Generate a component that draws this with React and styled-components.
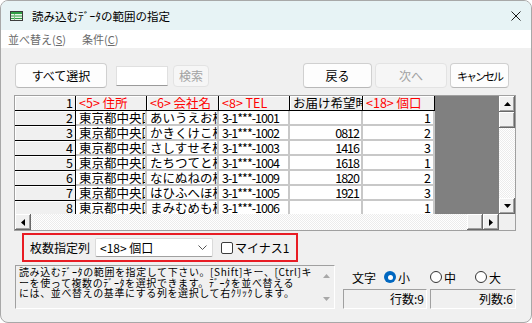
import React from 'react';
import styled, { createGlobalStyle } from 'styled-components';

const GlobalStyle = createGlobalStyle`
  html, body {
    margin: 0;
    padding: 0;
    background: #ffffff;
  }
  body {
    font-family: "Noto Sans CJK JP", "Noto Sans", sans-serif;
    color: #000;
  }
  * {
    box-sizing: border-box;
  }
`;

const Window = styled.div`
  width: 532px;
  height: 323px;
  border: 1px solid #a8a8a8;
  border-radius: 8px;
  overflow: hidden;
  display: flex;
  flex-direction: column;
  background: #f0f0f0;
`;

const TitleBar = styled.div`
  height: 29px;
  flex-shrink: 0;
  display: flex;
  align-items: center;
  gap: 9px;
  padding: 0 10px 0 9px;
  background: #e7f3f5;
  font-size: 11.5px;
`;

const CloseBox = styled.div`
  margin-left: auto;
  display: flex;
  align-items: center;
`;

const MenuBar = styled.div`
  height: 18px;
  flex-shrink: 0;
  display: flex;
  align-items: center;
  gap: 16px;
  padding-left: 7px;
  background: #ffffff;
  font-size: 11px;
  color: #6b6b6b;
`;

const Body = styled.div`
  flex: 1;
  display: flex;
  flex-direction: column;
  padding: 15px 15px 0 13px;
`;

const Toolbar = styled.div`
  display: flex;
  align-items: center;
  height: 25px;
  padding-left: 1px;
  padding-right: 7px;
`;

const Group = styled.div`
  display: flex;
  align-items: center;
  gap: ${(p) => p.$gap || 0}px;
  margin-left: ${(p) => (p.$right ? 'auto' : '0')};
`;

const Btn = styled.button`
  width: ${(p) => p.$w}px;
  height: ${(p) => p.$h || 25}px;
  margin-left: ${(p) => p.$ml || 0}px;
  padding: 0;
  border: 1px solid ${(p) => (p.disabled ? '#e3e3e3' : '#d0d0d0')};
  border-bottom-color: ${(p) => (p.disabled ? '#e3e3e3' : '#b8b8b8')};
  border-radius: 4px;
  background: ${(p) => (p.disabled ? '#f6f6f6' : '#fdfdfd')};
  color: ${(p) => (p.disabled ? '#a2a2a2' : '#000')};
  font-family: inherit;
  font-size: ${(p) => (p.$tight ? 11 : 12)}px;
  letter-spacing: ${(p) => (p.$tight ? -2 : 0)}px;
  white-space: nowrap;
`;

const SearchInput = styled.div`
  width: 52px;
  height: 20px;
  margin-left: 9px;
  background: #ffffff;
  border: 1px solid #e0e0e0;
  border-bottom-color: #9a9a9a;
`;

const GridFrame = styled.div`
  margin-top: 7px;
  height: 136px;
  border: 1px solid #a0a0a0;
  display: grid;
  grid-template-columns: 1fr 16px;
  grid-template-rows: 1fr 16px;
  background: #f0f0f0;
`;

const SheetArea = styled.div`
  background: #808080;
  overflow: hidden;
`;

const Sheet = styled.div`
  display: grid;
  grid-template-columns: 61px 71px 72px 71px 73px 72px;
  grid-auto-rows: 15px;
  width: max-content;
  font-size: 12.5px;
  color: #000;
`;

const CellBase = styled.div`
  white-space: nowrap;
  overflow: hidden;
`;

const RowHead = styled(CellBase)`
  background: #f0f0f0;
  border-right: 1px solid #000;
  border-bottom: 1px solid #000;
  box-shadow: inset 1px 1px #ffffff;
  text-align: right;
  padding-right: 2px;
  line-height: 14px;
  color: #000;
`;

const ColHead = styled(CellBase)`
  background: #f0f0f0;
  border-right: 1px solid #000;
  border-bottom: 1px solid #000;
  box-shadow: inset 1px 1px #ffffff;
  padding-left: 3px;
  line-height: 14px;
  color: ${(p) => (p.$red ? '#ff0000' : '#000')};
`;

const DataCell = styled(CellBase)`
  background: #ffffff;
  border-right: 2px solid #c8c8c8;
  border-bottom: 2px solid #c8c8c8;
  padding: 0 2px 0 3px;
  line-height: 13px;
  text-align: ${(p) => p.$align || 'left'};
  letter-spacing: ${(p) => (p.$narrow ? '-1px' : '0')};
`;

const VScroll = styled.div`
  display: flex;
  flex-direction: column;
`;

const HScroll = styled.div`
  display: flex;
`;

const ScrollBtn = styled.div`
  width: 16px;
  height: 16px;
  flex-shrink: 0;
  display: flex;
  align-items: center;
  justify-content: center;
  background: #f0f0f0;
  box-shadow: inset -1px -1px #696969, inset 1px 1px #ffffff, inset -2px -2px #a0a0a0;
`;

const Track = styled.div`
  flex: 1;
  background-color: #ffffff;
  background-image: repeating-conic-gradient(#ececec 0 25%, #ffffff 0 50%);
  background-size: 2px 2px;
`;

const Corner = styled.div`
  background: #f0f0f0;
`;

const OptionsBox = styled.div`
  margin: 2px 0 0 8px;
  width: 276px;
  height: 29px;
  border: 2px solid #e81c24;
  display: flex;
  align-items: center;
  padding-left: 6px;
  font-size: 12px;
`;

const Select = styled.div`
  width: 118px;
  height: 19px;
  margin-left: 5px;
  display: flex;
  align-items: center;
  padding: 0 5px 0 4px;
  background: #ffffff;
  border: 1px solid #dadada;
  border-bottom-color: #a0a0a0;
  border-radius: 2px;
  font-size: 12px;
`;

const Chevron = styled.svg`
  margin-left: auto;
`;

const CheckBox = styled.div`
  width: 12px;
  height: 12px;
  margin: 0 2px 0 8px;
  border: 1px solid #3c3c3c;
  border-radius: 2px;
  background: #ffffff;
`;

const BottomRow = styled.div`
  display: flex;
  margin-top: 3px;
  padding-left: 1px;
`;

const DescBox = styled.div`
  width: 320px;
  height: 44px;
  display: flex;
  border: 1px solid;
  border-color: #a0a0a0 #ffffff #ffffff #a0a0a0;
  background: #f0f0f0;
`;

const DescText = styled.div`
  flex: 1;
  padding: 1px 0 0 3px;
  font-size: 10px;
  letter-spacing: 0.6px;
  line-height: 10.5px;
  white-space: nowrap;
  overflow: hidden;
`;

const DescScroll = styled.div`
  width: 16px;
  display: flex;
  flex-direction: column;
  align-items: center;
  justify-content: space-between;
  padding: 8px 0 7px;
`;

const SidePanel = styled.div`
  flex: 1;
  margin-left: 8px;
  display: flex;
  flex-direction: column;
`;

const RadioRow = styled.div`
  height: 24px;
  display: flex;
  align-items: center;
  padding-left: 9px;
  font-size: 12px;
`;

const RadioItem = styled.div`
  display: flex;
  align-items: center;
  gap: 2px;
  margin-left: ${(p) => p.$ml}px;
`;

const Radio = styled.span`
  width: 12px;
  height: 12px;
  border-radius: 50%;
  display: flex;
  align-items: center;
  justify-content: center;
  border: ${(p) => (p.$on ? 'none' : '1px solid #333')};
  background: ${(p) => (p.$on ? '#0067c0' : '#ffffff')};

  &::after {
    content: '';
    display: ${(p) => (p.$on ? 'block' : 'none')};
    width: 5px;
    height: 5px;
    border-radius: 50%;
    background: #ffffff;
  }
`;

const StatusRow = styled.div`
  display: flex;
  gap: 3px;
`;

const StatusBox = styled.div`
  width: ${(p) => p.$w}px;
  height: 20px;
  border: 1px solid;
  border-color: #a0a0a0 #ffffff #ffffff #a0a0a0;
  text-align: right;
  padding-right: 2px;
  font-size: 12px;
  line-height: 18px;
`;

const Arrow = ({ dir, color = '#000' }) => {
  const pts = {
    up: '0,4 7,4 3.5,0',
    down: '0,0 7,0 3.5,4',
    left: '4,0 4,7 0,3.5',
    right: '0,0 0,7 4,3.5',
  }[dir];
  const vertical = dir === 'up' || dir === 'down';
  return (
    <svg width={vertical ? 7 : 4} height={vertical ? 4 : 7}>
      <polygon points={pts} fill={color} />
    </svg>
  );
};

const headers = [
  { text: '<5> 住所', red: true },
  { text: '<6> 会社名', red: true },
  { text: '<8> TEL', red: true },
  { text: 'お届け希望時間', red: false },
  { text: '<18> 個口', red: true },
];

const rows = [
  ['東京都中央区', 'あいうえお株式会社', '3-1***-1001', '', '1'],
  ['東京都中央区', 'かきくけこ株式会社', '3-1***-1002', '0812', '2'],
  ['東京都中央区', 'さしすせそ株式会社', '3-1***-1003', '1416', '3'],
  ['東京都中央区', 'たちつてと株式会社', '3-1***-1004', '1618', '1'],
  ['東京都中央区', 'なにぬねの株式会社', '3-1***-1009', '1820', '2'],
  ['東京都中央区', 'はひふへほ株式会社', '3-1***-1005', '1921', '3'],
  ['東京都中央区', 'まみむめも株式会社', '3-1***-1006', '', '1'],
];

const App = () => {
  return (
    <>
      <GlobalStyle />
      <Window>
        <TitleBar>
          <svg width="13" height="10">
            <rect x="0.5" y="0.5" width="12" height="9" fill="#e9f5e6" stroke="#3d3d3d" />
            <rect x="1" y="1" width="11" height="2" fill="#2f9e44" />
            <line x1="1" y1="5" x2="12" y2="5" stroke="#2f9e44" />
            <line x1="1" y1="7.5" x2="12" y2="7.5" stroke="#2f9e44" />
            <line x1="4.5" y1="3" x2="4.5" y2="9" stroke="#7bbf7f" />
          </svg>
          <span>読み込むﾃﾞｰﾀの範囲の指定</span>
          <CloseBox>
            <svg width="10" height="10">
              <path d="M0.5 0.5 L9.5 9.5 M9.5 0.5 L0.5 9.5" stroke="#1a1a1a" strokeWidth="1" />
            </svg>
          </CloseBox>
        </TitleBar>
        <MenuBar>
          <span>並べ替え(<u>S</u>)</span>
          <span>条件(<u>C</u>)</span>
        </MenuBar>
        <Body>
          <Toolbar>
            <Group>
              <Btn $w={92}>すべて選択</Btn>
              <SearchInput />
              <Btn $w={36} $h={22} $ml={5} disabled>
                検索
              </Btn>
            </Group>
            <Group $right $gap={3}>
              <Btn $w={69}>戻る</Btn>
              <Btn $w={72} disabled>
                次へ
              </Btn>
              <Btn $w={59} $tight>
                キャンセル
              </Btn>
            </Group>
          </Toolbar>

          <GridFrame>
            <SheetArea>
              <Sheet>
                <RowHead>1</RowHead>
                {headers.map((h) => (
                  <ColHead key={h.text} $red={h.red}>
                    {h.text}
                  </ColHead>
                ))}
                {rows.map((r, idx) => (
                  <React.Fragment key={idx}>
                    <RowHead>{idx + 2}</RowHead>
                    <DataCell>{r[0]}</DataCell>
                    <DataCell>{r[1]}</DataCell>
                    <DataCell $narrow>{r[2]}</DataCell>
                    <DataCell $align="right" $narrow>
                      {r[3]}
                    </DataCell>
                    <DataCell $align="right">{r[4]}</DataCell>
                  </React.Fragment>
                ))}
              </Sheet>
            </SheetArea>
            <VScroll>
              <ScrollBtn>
                <Arrow dir="up" />
              </ScrollBtn>
              <ScrollBtn />
              <Track />
              <ScrollBtn>
                <Arrow dir="down" />
              </ScrollBtn>
            </VScroll>
            <HScroll>
              <ScrollBtn>
                <Arrow dir="left" />
              </ScrollBtn>
              <Track />
              <ScrollBtn />
              <ScrollBtn>
                <Arrow dir="right" />
              </ScrollBtn>
            </HScroll>
            <Corner />
          </GridFrame>

          <OptionsBox>
            <span>枚数指定列</span>
            <Select>
              <span>{'<18> 個口'}</span>
              <Chevron width="9" height="5">
                <path d="M0.5 0.5 L4.5 4.5 L8.5 0.5" fill="none" stroke="#555" />
              </Chevron>
            </Select>
            <CheckBox />
            <span>マイナス1</span>
          </OptionsBox>

          <BottomRow>
            <DescBox>
              <DescText>
                読み込むﾃﾞｰﾀの範囲を指定して下さい。[Shift]キー、[Ctrl]キ
                <br />
                ーを使って複数のﾃﾞｰﾀを選択できます。ﾃﾞｰﾀを並べ替える
                <br />
                には、並べ替えの基準にする列を選択して右ｸﾘｯｸします。
              </DescText>
              <DescScroll>
                <Arrow dir="up" color="#a8a8a8" />
                <Arrow dir="down" color="#a8a8a8" />
              </DescScroll>
            </DescBox>
            <SidePanel>
              <RadioRow>
                <span>文字</span>
                <RadioItem $ml={8}>
                  <Radio $on />
                  <span>小</span>
                </RadioItem>
                <RadioItem $ml={20}>
                  <Radio />
                  <span>中</span>
                </RadioItem>
                <RadioItem $ml={19}>
                  <Radio />
                  <span>大</span>
                </RadioItem>
              </RadioRow>
              <StatusRow>
                <StatusBox $w={84}>行数:9</StatusBox>
                <StatusBox $w={86}>列数:6</StatusBox>
              </StatusRow>
            </SidePanel>
          </BottomRow>
        </Body>
      </Window>
    </>
  );
};

export default App;
